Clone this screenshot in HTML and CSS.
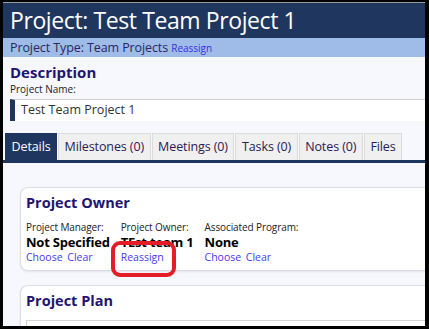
FILE: index.html
```html
<!DOCTYPE html>
<html>
<head>
<meta charset="utf-8">
<link rel="stylesheet" href="styles.css">
</head>
<body>
<div class="window">
  <header class="title-bar">Project: Test Team Project 1</header>
  <div class="type-bar">Project Type: Team Projects <a class="small-link">Reassign</a></div>
  <section class="description">
    <h2 class="section-title">Description</h2>
    <div class="field-label">Project Name:</div>
    <div class="text-input">Test Team Project 1</div>
  </section>
  <nav class="tabs">
    <div class="tab active">Details</div>
    <div class="tab">Milestones (0)</div>
    <div class="tab">Meetings (0)</div>
    <div class="tab">Tasks (0)</div>
    <div class="tab">Notes (0)</div>
    <div class="tab">Files</div>
  </nav>
  <div class="tab-body">
    <div class="card">
      <h3 class="card-title">Project Owner</h3>
      <div class="owner-row">
        <div class="owner-col">
          <div class="col-label">Project Manager:</div>
          <div class="col-value">Not Specified</div>
          <div class="col-links"><a>Choose</a> <a>Clear</a></div>
        </div>
        <div class="owner-col highlight">
          <div class="col-label">Project Owner:</div>
          <div class="col-value">TEst team 1</div>
          <div class="col-links"><a>Reassign</a></div>
          <div class="annotation"></div>
        </div>
        <div class="owner-col">
          <div class="col-label">Associated Program:</div>
          <div class="col-value">None</div>
          <div class="col-links"><a>Choose</a> <a>Clear</a></div>
        </div>
      </div>
    </div>
    <div class="card">
      <h3 class="card-title">Project Plan</h3>
      <div class="plan-box"></div>
    </div>
  </div>
</div>
</body>
</html>
```

FILE: styles.css
```css
html, body {
  margin: 0;
  padding: 0;
  background: #000;
}
body {
  font-family: "Open Sans", "Noto Sans", sans-serif;
  color: #111;
}
.window {
  margin: 2px 4px 0 3px;
  height: 324px;
  overflow: hidden;
  background: #f7f8fe;
  border-top: 1px solid #9a9a9a;
  box-sizing: border-box;
}
.title-bar {
  background: #1f375f;
  color: #fff;
  height: 35px;
  padding-left: 7px;
  font-size: 23px;
  line-height: 35px;
  letter-spacing: -0.4px;
}
.type-bar {
  background: #9fbbe8;
  height: 19px;
  line-height: 19px;
  padding-left: 7px;
  font-size: 12.5px;
  color: #2b2560;
  letter-spacing: -0.1px;
}
.small-link {
  font-size: 10px;
  color: #3a2de0;
  letter-spacing: 0;
}
.description {
  padding: 5px 0 0 7px;
}
.section-title {
  margin: 0;
  font-size: 15px;
  font-weight: 700;
  color: #221470;
  line-height: 20px;
}
.field-label {
  font-size: 10px;
  line-height: 14px;
  margin-top: 0;
  color: #222;
}
.text-input {
  margin-top: 3px;
  background: #fff;
  border-top: 1px solid #cfcfcf;
  border-left: 5px solid #1f375f;
  height: 21px;
  line-height: 20px;
  padding-left: 6px;
  font-size: 12.5px;
  color: #333;
}
.tabs {
  display: flex;
  margin-top: 12px;
  padding-left: 2px;
  border-bottom: 3px solid #1f375f;
}
.tab {
  background: #f0f0f0;
  border: 1px solid #dcdcdc;
  border-bottom: none;
  padding: 0 5.5px;
  height: 26px;
  line-height: 26px;
  font-size: 12.5px;
  color: #2a2050;
  margin-right: 1px;
  letter-spacing: -0.1px;
}
.tab.active {
  background: #1f375f;
  border-color: #1f375f;
  color: #fff;
}
.tab-body {
  padding: 24px 0 0 17px;
}
.card {
  background: #fff;
  border: 1px solid #dcdee6;
  border-right: none;
  border-radius: 8px 0 0 8px;
  box-shadow: 0 1px 2px rgba(0,0,0,0.08);
  padding: 5px 0 6px 5px;
  margin-bottom: 14px;
}
.card-title {
  margin: 0;
  font-size: 14.5px;
  font-weight: 700;
  color: #221470;
  line-height: 20px;
}
.owner-row {
  display: flex;
  gap: 11px;
  margin-top: 8px;
}
.owner-col {
  position: relative;
}
.col-label {
  font-size: 10px;
  line-height: 13px;
  color: #222;
  letter-spacing: -0.1px;
}
.col-value {
  font-size: 13px;
  font-weight: 700;
  line-height: 17px;
  color: #000;
  letter-spacing: -0.2px;
}
.col-links {
  font-size: 10.5px;
  line-height: 13px;
  color: #4a38f0;
}
.col-links a {
  margin-right: 2px;
}
.annotation {
  position: absolute;
  left: -10px;
  top: 20px;
  width: 57px;
  height: 28px;
  border: 4px solid #e41d26;
  border-radius: 9px;
}
.plan-box {
  margin-top: 9px;
  border: 1px solid #d6d6d6;
  border-right: none;
  height: 30px;
  background: #fff;
}
```
